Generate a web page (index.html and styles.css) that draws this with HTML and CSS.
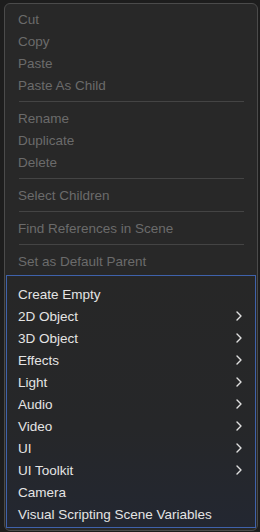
FILE: index.html
```html
<!DOCTYPE html>
<html lang="en">

<head>
  <meta charset="UTF-8">
  <meta name="viewport" content="width=device-width, initial-scale=1.0">
  <title>Hierarchy Context Menu</title>
  <link rel="stylesheet" href="styles.css">
</head>

<body>
  <div class="menu">
    <!-- Edit actions (disabled) -->
    <div class="item disabled">Cut</div>
    <div class="item disabled">Copy</div>
    <div class="item disabled">Paste</div>
    <div class="item disabled">Paste As Child</div>
    <div class="separator"></div>
    <div class="item disabled">Rename</div>
    <div class="item disabled">Duplicate</div>
    <div class="item disabled">Delete</div>
    <div class="separator"></div>
    <div class="item disabled">Select Children</div>
    <div class="separator"></div>
    <div class="item disabled">Find References in Scene</div>
    <div class="separator"></div>
    <div class="item disabled">Set as Default Parent</div>

    <!-- Create section -->
    <div class="create-group">
      <div class="item">Create Empty</div>
      <div class="item submenu">2D Object <svg class="chevron" viewBox="0 0 6 10"><polyline points="1,1 5,5 1,9"/></svg></div>
      <div class="item submenu">3D Object <svg class="chevron" viewBox="0 0 6 10"><polyline points="1,1 5,5 1,9"/></svg></div>
      <div class="item submenu">Effects <svg class="chevron" viewBox="0 0 6 10"><polyline points="1,1 5,5 1,9"/></svg></div>
      <div class="item submenu">Light <svg class="chevron" viewBox="0 0 6 10"><polyline points="1,1 5,5 1,9"/></svg></div>
      <div class="item submenu">Audio <svg class="chevron" viewBox="0 0 6 10"><polyline points="1,1 5,5 1,9"/></svg></div>
      <div class="item submenu">Video <svg class="chevron" viewBox="0 0 6 10"><polyline points="1,1 5,5 1,9"/></svg></div>
      <div class="item submenu">UI <svg class="chevron" viewBox="0 0 6 10"><polyline points="1,1 5,5 1,9"/></svg></div>
      <div class="item submenu">UI Toolkit <svg class="chevron" viewBox="0 0 6 10"><polyline points="1,1 5,5 1,9"/></svg></div>
      <div class="item">Camera</div>
      <div class="item">Visual Scripting Scene Variables</div>
    </div>
  </div>
</body>

</html>
```

FILE: styles.css
```css
body {
  margin: 0;
  background-color: #1d1d1d;
  font-family: 'Liberation Sans', Arial, sans-serif;
  font-size: 13.5px;
  color: #e4e4e4;
}

.menu {
  box-sizing: border-box;
  width: 254px;
  margin: 3px 0 0 4px;
  padding: 4px 1px 2px 1px;
  background-color: #282828;
  border: 1px solid #4b4b4b;
  border-radius: 6px;
}

.item {
  display: flex;
  justify-content: space-between;
  align-items: center;
  height: 22px;
  padding: 0 13px 0 12px;
  white-space: nowrap;
}

.disabled {
  color: #6b6b6b;
}

.separator {
  height: 1px;
  margin: 5px 12px 5px 13px;
  background-color: #444444;
}

.create-group {
  margin-top: 3px;
  padding: 7px 0 2px 0;
  border: 1px solid #3f62ab;
  background: linear-gradient(to bottom, #272727 0%, #262729 60%, #232731 100%);
}

.create-group .item {
  padding: 0 13px 0 11px;
}

.chevron {
  width: 6px;
  height: 10px;
  fill: none;
  stroke: #e0e0e0;
  stroke-width: 1.4;
  stroke-linecap: round;
  stroke-linejoin: round;
}
```
